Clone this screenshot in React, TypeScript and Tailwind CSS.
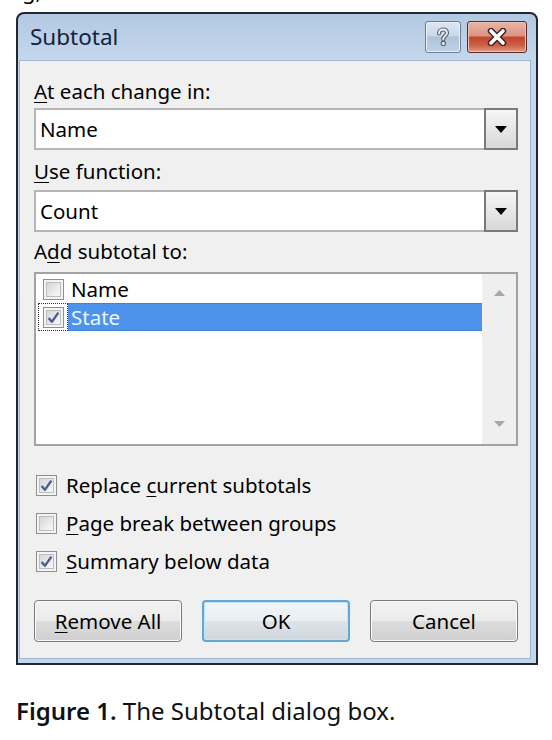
import React from "react";

function U({ children }: { children: React.ReactNode }) {
  return <span className="underline decoration-1 underline-offset-[3px]">{children}</span>;
}

function Check({ checked }: { checked: boolean }) {
  return (
    <div className="w-[21px] h-[21px] border border-[#8e8f8f] bg-[#f4f4f4] p-[2px] shrink-0">
      <div className="w-full h-full border border-[#bdbdbd] bg-[linear-gradient(135deg,#d6d6d6,#f9f9f9)]">
        {checked && (
          <svg width="13" height="13" viewBox="0 0 12 12" className="block">
            <path d="M1.5 6.5 L4.5 10 L10.5 1.5" fill="none" stroke="#4a5d8c" strokeWidth="2.2" strokeLinejoin="round" />
          </svg>
        )}
      </div>
    </div>
  );
}

function Combo({ value }: { value: string }) {
  return (
    <div className="h-[42px] flex">
      <div className="flex-1 border-2 border-r-0 border-[#b5b5b5] bg-white flex items-center pl-[4px] text-[20.5px] text-black">
        {value}
      </div>
      <div className="w-[34px] border-2 border-[#7a7a7a] bg-[linear-gradient(#f6f6f6,#d8d8d8)] flex items-center justify-center">
        <svg width="12" height="7" viewBox="0 0 12 7">
          <path d="M0 0H12L6 7Z" fill="#000" />
        </svg>
      </div>
    </div>
  );
}

function Btn({ children, def }: { children: React.ReactNode; def?: boolean }) {
  return (
    <div
      className={
        def
          ? "w-[148px] h-[42px] rounded-[4px] border-2 border-[#62a7d8] shadow-[inset_0_0_0_1px_#c4e5f8] bg-[linear-gradient(#f1f5f8_0%,#e9eef2_50%,#dde3e8_51%,#d0d7dd_100%)] flex items-center justify-center text-[20.5px] text-black"
          : "w-[148px] h-[42px] rounded-[4px] border border-[#7a7a7a] shadow-[inset_0_0_0_1px_#fbfbfb] bg-[linear-gradient(#f3f3f3_0%,#ebebeb_50%,#dddddd_51%,#cfcfcf_100%)] flex items-center justify-center text-[20.5px] text-black"
      }
    >
      {children}
    </div>
  );
}

function Dialog() {
  return (
    <div className="ml-[16px] mt-[6px] w-[522px] h-[653px] border-2 border-[#22272d] rounded-t-[8px] bg-[linear-gradient(180deg,#b3c8e2_0px,#c4d7ec_46px,#c0d7ef_100%)] flex flex-col pl-[1px] pr-[5px] pb-[4px]">
      <div className="h-[46px] shrink-0 flex items-center pl-[11px] pr-[4px]">
        <div className="flex-1 text-[22.5px] text-[#14233a]">Subtotal</div>
        <div className="w-[36px] h-[32px] rounded-[3px] border border-[#6b7c92] bg-[linear-gradient(#dde7f2_0%,#cbd9ea_45%,#aec3dc_50%,#c0d1e4_100%)] shadow-[inset_0_0_0_1px_#e9f0f8] flex items-center justify-center">
          <svg width="16" height="20" viewBox="0 0 16 20">
            <path d="M4 6.5 C4 3.8 5.8 2.5 8 2.5 C10.4 2.5 12 3.8 12 6 C12 8.3 9 9 8.3 11.2 L8.3 12.5" fill="none" stroke="#5a6472" strokeWidth="4.2" strokeLinecap="round" />
            <path d="M4 6.5 C4 3.8 5.8 2.5 8 2.5 C10.4 2.5 12 3.8 12 6 C12 8.3 9 9 8.3 11.2 L8.3 12.5" fill="none" stroke="#eef2f7" strokeWidth="1.8" strokeLinecap="round" />
            <circle cx="8.3" cy="16.5" r="2.2" fill="#eef2f7" stroke="#5a6472" strokeWidth="1.2" />
          </svg>
        </div>
        <div className="ml-[6px] w-[60px] h-[32px] rounded-[3px] border border-[#5a2820] bg-[linear-gradient(#ebb4a6_0%,#dc9482_45%,#c4442c_52%,#cc6149_78%,#e29d88_100%)] shadow-[inset_0_0_0_1px_#f0c3b6] flex items-center justify-center">
          <svg width="22" height="18" viewBox="0 0 22 18">
            <path d="M5 3 L17 15 M17 3 L5 15" stroke="#3b2623" strokeWidth="6.5" strokeLinecap="round" />
            <path d="M5 3 L17 15 M17 3 L5 15" stroke="#ffffff" strokeWidth="3.6" strokeLinecap="round" />
          </svg>
        </div>
      </div>
      <div className="flex-1 bg-[#f0f0f0] border border-[#a2b6cd] pl-[14px] pr-[12px] pt-[15px] flex flex-col text-black">
        <div className="h-[30px] leading-[30px] text-[20.5px]">
          <U>A</U>t each change in:
        </div>
        <div className="mt-[2px]">
          <Combo value="Name" />
        </div>
        <div className="mt-[6px] h-[30px] leading-[30px] text-[20.5px]">
          <U>U</U>se function:
        </div>
        <div className="mt-[4px]">
          <Combo value="Count" />
        </div>
        <div className="mt-[4px] h-[30px] leading-[30px] text-[20.5px]">
          A<U>d</U>d subtotal to:
        </div>
        <div className="mt-[6px] h-[174px] border-2 border-[#a3a3a3] bg-white flex">
          <div className="flex-1 pt-[1px]">
            <div className="h-[28px] flex">
              <div className="ml-[2px] w-[30px] flex items-center justify-center">
                <Check checked={false} />
              </div>
              <div className="flex-1 flex items-center pl-[3px] text-[20.5px]">Name</div>
            </div>
            <div className="h-[28px] flex">
              <div className="ml-[2px] w-[30px] flex items-center justify-center border border-dotted border-[#333]">
                <Check checked={true} />
              </div>
              <div className="flex-1 flex items-center pl-[3px] text-[20.5px] bg-[#4d93eb] border-y border-[#3f82d6] text-[#eef5ff]">
                State
              </div>
            </div>
          </div>
          <div className="w-[34px] bg-[#efefef] flex flex-col justify-between">
            <div className="h-[38px] flex items-center justify-center">
              <svg width="11" height="6" viewBox="0 0 11 6">
                <path d="M0 6H11L5.5 0Z" fill="#a8a8a8" />
              </svg>
            </div>
            <div className="h-[40px] flex items-center justify-center">
              <svg width="11" height="6" viewBox="0 0 11 6">
                <path d="M0 0H11L5.5 6Z" fill="#a8a8a8" />
              </svg>
            </div>
          </div>
        </div>
        <div className="mt-[20px] flex flex-col">
          <div className="h-[38px] flex items-center pl-[2px] gap-[9px] text-[20.5px]">
            <Check checked={true} />
            <span>
              Replace <U>c</U>urrent subtotals
            </span>
          </div>
          <div className="h-[38px] flex items-center pl-[2px] gap-[9px] text-[20.5px]">
            <Check checked={false} />
            <span>
              <U>P</U>age break between groups
            </span>
          </div>
          <div className="h-[38px] flex items-center pl-[2px] gap-[9px] text-[20.5px]">
            <Check checked={true} />
            <span>
              <U>S</U>ummary below data
            </span>
          </div>
        </div>
        <div className="mt-[20px] flex justify-between">
          <Btn>
            <U>R</U>emove All
          </Btn>
          <Btn def>OK</Btn>
          <Btn>Cancel</Btn>
        </div>
      </div>
    </div>
  );
}

export default function App() {
  return (
    <div className="w-[552px] h-[740px] bg-white overflow-hidden font-['Noto_Sans','Open_Sans',sans-serif]">
      <div className="h-[6px] overflow-hidden">
        <div className="-mt-[23px] ml-[22px] text-[22px] leading-[26px] text-black">g,</div>
      </div>
      <Dialog />
      <div className="mt-[31px] ml-[16px] text-[24px] leading-[30px] text-[#111]">
        <b className="font-semibold">Figure 1.</b> The Subtotal dialog box.
      </div>
    </div>
  );
}
